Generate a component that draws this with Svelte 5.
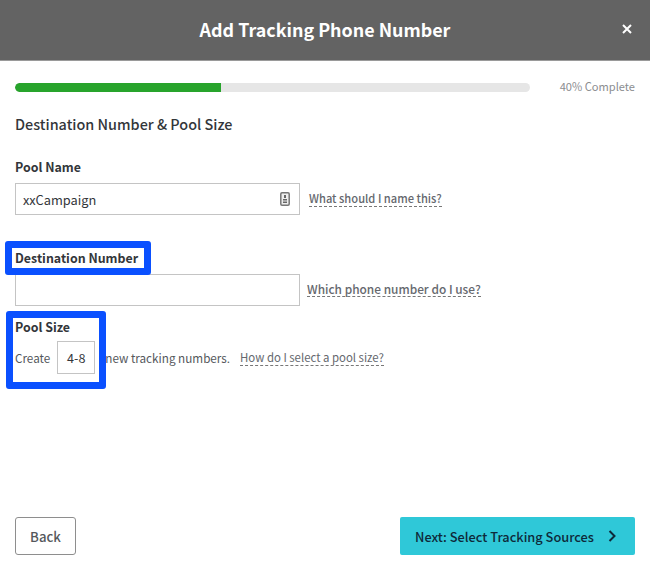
<script lang="ts">
	let progress = 40;
</script>

<div class="modal">
	<header class="head">
		<h1>Add Tracking Phone Number</h1>
		<button class="close" aria-label="Close">
			<svg width="10" height="10" viewBox="0 0 10 10"><path d="M1 1l8 8M9 1l-8 8" stroke="#fff" stroke-width="2" fill="none" /></svg>
		</button>
	</header>

	<main class="body">
		<div class="progress">
			<div class="track"><div class="fill" style="width: {progress}%"></div></div>
			<span class="pct">{progress}% Complete</span>
		</div>

		<h2>Destination Number &amp; Pool Size</h2>

		<section class="name-field">
			<div class="label">Pool Name</div>
			<div class="row">
				<div class="input wide">
					<span>xxCampaign</span>
					<svg class="contact" width="10" height="14" viewBox="0 0 10 14">
						<rect x="0.8" y="0.8" width="8.4" height="12.4" rx="1.2" fill="#eee" stroke="#777" stroke-width="1.5" />
						<rect x="4" y="3" width="2" height="3" fill="#666" />
						<rect x="3" y="7" width="4" height="1.5" fill="#666" />
						<rect x="3" y="9.5" width="4" height="1.5" fill="#666" />
					</svg>
				</div>
				<a class="help name-help" href="#name">What should I name this?</a>
			</div>
		</section>

		<section class="dest-field">
			<div class="label marked">Destination Number<i class="mark dest"></i></div>
			<div class="row">
				<div class="input wide"></div>
				<a class="help near" href="#number">Which phone number do I use?</a>
			</div>
		</section>

		<section class="size-field">
			<i class="mark size"></i>
			<div class="label">Pool Size</div>
			<div class="create">
				<span>Create</span>
				<div class="input small">4-8</div>
				<span>new tracking numbers.</span>
				<a class="help" href="#size">How do I select a pool size?</a>
			</div>
		</section>
	</main>

	<footer class="foot">
		<button class="back">Back</button>
		<button class="next">
			<span>Next: Select Tracking Sources</span>
			<svg width="8" height="12" viewBox="0 0 8 12"><path d="M1.5 1l5 5-5 5" stroke="#0e2a3a" stroke-width="2" fill="none" /></svg>
		</button>
	</footer>
</div>

<style>
	:global(body) { margin: 0; background: #fff; font-family: "Noto Sans CJK JP", "Noto Sans", sans-serif; color: #3a3d42; }
	.modal { width: 650px; height: 571px; display: flex; flex-direction: column; overflow: hidden; }
	.head { position: relative; box-sizing: border-box; height: 61px; background: #636363; border-bottom: 1px solid #9a9a9a; display: flex; align-items: center; justify-content: center; }
	h1 { margin: 0 0 2px; color: #fff; font-size: 17.9px; font-weight: 700; line-height: 58px; }
	.close { position: absolute; right: 18px; top: 24px; padding: 0; width: 10px; height: 10px; border: 0; background: none; display: flex; }
	.body { flex: 1; padding: 21px 15px 0; }
	.progress { display: flex; align-items: center; justify-content: space-between; height: 10px; }
	.track { width: 515px; height: 9px; border-radius: 5px; background: #e6e6e6; overflow: hidden; }
	.fill { height: 100%; background: #28a42c; border-radius: 5px 0 0 5px; }
	.pct { font-size: 11.1px; line-height: 10px; color: #8b8d90; margin-top: -2px; }
	h2 { margin: 21px 0 0; font-size: 14.4px; font-weight: 500; line-height: 22px; color: #33363a; }
	.label { font-size: 12.4px; font-weight: 700; line-height: 18px; color: #33363a; white-space: nowrap; }
	.name-field { margin-top: 23px; }
	.dest-field { margin-top: 34px; }
	.size-field { position: relative; margin-top: 12px; }
	.row { display: flex; align-items: center; margin-top: 7px; }
	.input { box-sizing: border-box; background: #fff; border: 1px solid #c4c4c4; font-size: 12.8px; color: #33363a; display: flex; align-items: center; }
	.wide { width: 285px; height: 32px; padding: 0 9px 0 7px; justify-content: space-between; }
	.small { width: 38px; height: 33px; justify-content: center; font-size: 12.6px; margin: 0 10px 0 7px; padding-bottom: 1px; }
	.help { margin-left: 9px; font-size: 11.9px; font-weight: 500; line-height: 15px; color: #65686e; text-decoration: none; border-bottom: 1px dashed #777; margin-top: -2px; }
	.name-help { font-size: 11.15px; margin-top: 0; }
	.near { margin-left: 7px; }
	.create { display: flex; align-items: center; margin-top: 5px; font-size: 11.7px; color: #55585c; }
	.create .help { margin-left: 10px; margin-top: 0; font-size: 11.4px; font-weight: 400; }
	.marked { position: relative; }
	.mark { position: absolute; box-sizing: border-box; border: 7px solid #0a50ff; border-radius: 3px; }
	.dest { left: -10px; top: -8px; width: 146px; height: 34px; }
	.size { left: -9px; top: -7px; width: 100px; height: 78px; }
	.foot { display: flex; justify-content: space-between; padding: 0 15px 16px; }
	.back { width: 61px; height: 38px; border: 1px solid #8e8e8e; border-radius: 3px; background: #fff; font: 500 13.2px "Noto Sans CJK JP", sans-serif; color: #55585c; padding: 0; }
	.next { width: 235px; height: 38px; border: 0; border-radius: 2px; background: #2fc8d8; font: 500 12.8px "Noto Sans CJK JP", sans-serif; color: #0e2a3a; display: flex; align-items: center; justify-content: space-between; padding: 0 19px 0 15px; white-space: nowrap; }
</style>
